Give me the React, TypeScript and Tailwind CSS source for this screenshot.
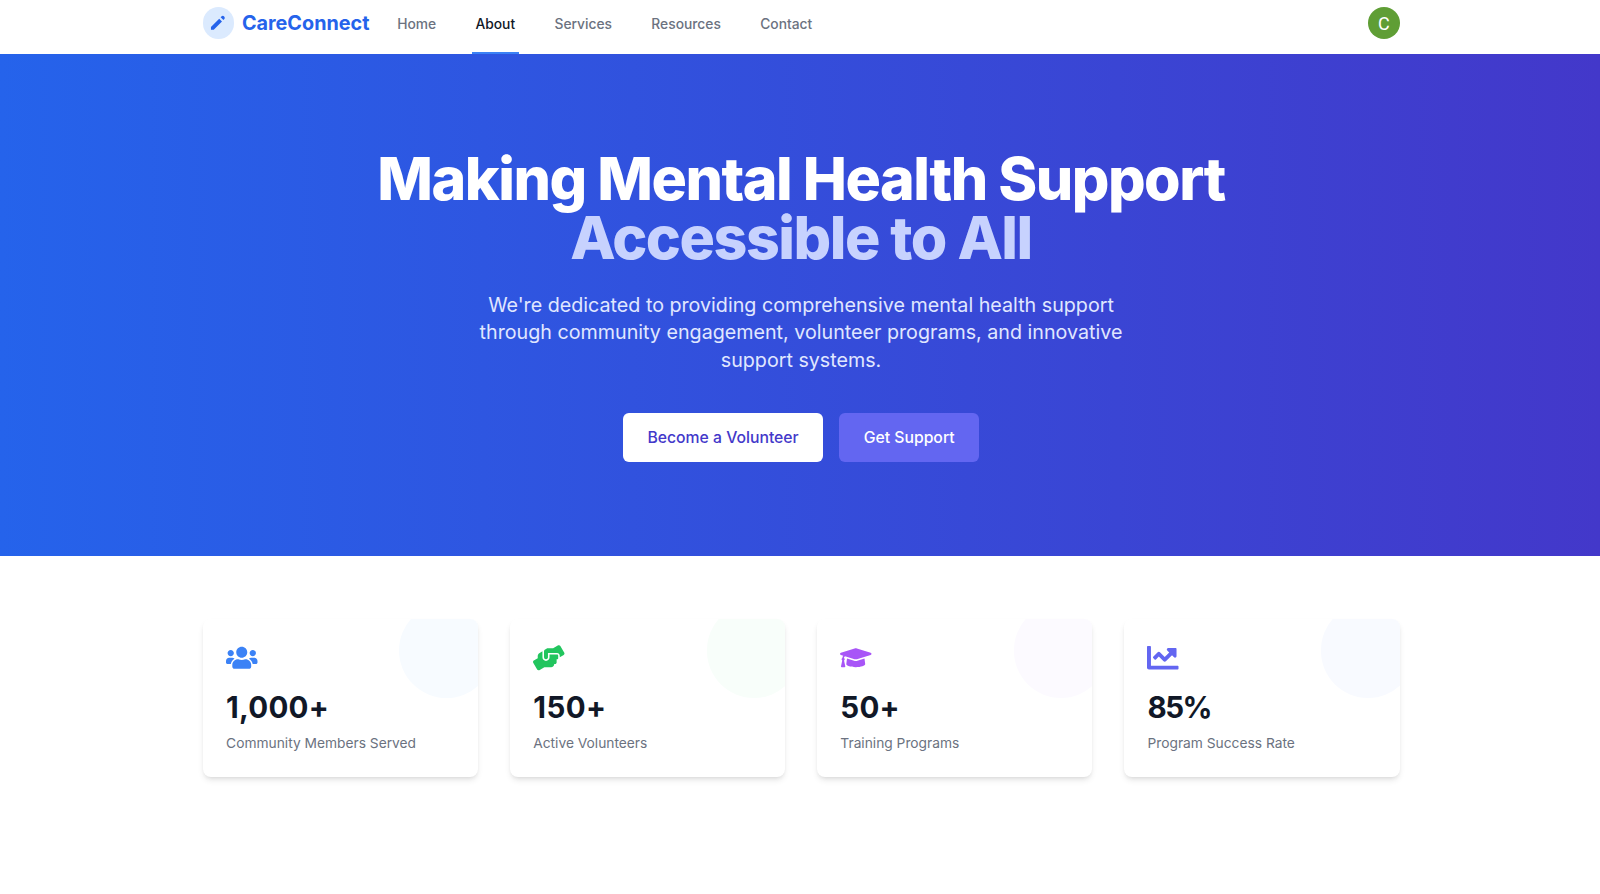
import { FaChartLine, FaGraduationCap, FaHandsHelping, FaUsers } from "react-icons/fa";
import { HiPencil } from "react-icons/hi";

const links = ["Home", "About", "Services", "Resources", "Contact"];

const stats = [
  {
    icon: FaUsers,
    value: "1,000+",
    label: "Community Members Served",
    color: "text-[#3b82f6]",
    blob: "bg-[#f7fbff]",
    tracking: "tracking-[0.008em]",
  },
  {
    icon: FaHandsHelping,
    value: "150+",
    label: "Active Volunteers",
    color: "text-[#22c55e]",
    blob: "bg-[#f8fefa]",
    tracking: "tracking-[0.015em]",
  },
  {
    icon: FaGraduationCap,
    value: "50+",
    label: "Training Programs",
    color: "text-[#a855f7]",
    blob: "bg-[#fcfaff]",
    tracking: "tracking-[0.008em]",
  },
  {
    icon: FaChartLine,
    value: "85%",
    label: "Program Success Rate",
    color: "text-[#6366f1]",
    blob: "bg-[#f8faff]",
    tracking: "tracking-[-0.05em]",
  },
];

function Navbar() {
  return (
    <nav className="h-[54.4px] bg-white pl-[2px]">
      <div className="mx-auto flex h-full w-[1197px] items-start justify-between">
        <div className="flex h-full">
          <a href="#" className="flex h-[46px] items-center gap-[7.9px]">
            <span className="flex size-[31.5px] items-center justify-center rounded-full bg-[#dbeafe]">
              <HiPencil className="size-[19.7px] text-[#2563eb]" />
            </span>
            <span className="pt-[1.5px] text-[19.8px] font-bold text-[#2563eb]">CareConnect</span>
          </a>
          <div className="ml-[23.8px] flex h-full gap-[31.6px]">
            {links.map((link) => (
              <a
                key={link}
                href="#"
                className={
                  link === "About"
                    ? "border-b-2 border-[#3b82f6] px-[3.9px] pt-[15.3px] text-[13.8px] leading-[19.7px] font-medium text-[#111827]"
                    : "px-[3.9px] pt-[15.3px] text-[13.8px] leading-[19.7px] font-medium text-[#6b7280]"
                }
              >
                {link}
              </a>
            ))}
          </div>
        </div>
        <div className="mt-[7.4px] flex size-[31.5px] items-center justify-center rounded-full bg-[#5f9e35] pt-px font-[Roboto] text-[18px] text-white">
          C
        </div>
      </div>
    </nav>
  );
}

function Hero() {
  return (
    <section className="h-[502px] bg-linear-to-r/srgb from-[#2563eb] to-[#4338ca] pt-[94.6px] pl-[2px] text-center">
      <h1 className="text-[59.06px] leading-[59.06px] font-extrabold tracking-[-0.025em] text-white">
        <span className="block">Making Mental Health Support</span>
        <span className="block text-[#c7d2fe]">Accessible to All</span>
      </h1>
      <p className="mx-auto mt-[24.6px] w-[661.5px] text-[19.69px] leading-[27.56px] text-[#e0e7ff]">
        We're dedicated to providing comprehensive mental health support through community
        engagement, volunteer programs, and innovative support systems.
      </p>
      <div className="mt-[38.4px] flex justify-center gap-[15.75px]">
        <button className="h-[49.2px] rounded-[5.9px] bg-white px-[24.6px] text-[15.75px] font-medium text-[#4338ca]">
          Become a Volunteer
        </button>
        <button className="h-[49.2px] rounded-[5.9px] bg-[#6366f1] px-[24.6px] text-[15.75px] font-medium text-white">
          Get Support
        </button>
      </div>
    </section>
  );
}

export default function App() {
  return (
    <div className="h-[894px] overflow-hidden bg-white font-[Inter,sans-serif]">
      <Navbar />
      <Hero />
      <section className="pt-[62.5px] pl-[2px]">
        <div className="mx-auto grid w-[1197px] grid-cols-4 gap-[31.5px]">
          {stats.map(({ icon: Icon, value, label, color, blob, tracking }) => (
            <div
              key={label}
              className="relative h-[158px] overflow-hidden rounded-[7.9px] bg-white p-[23.6px] shadow-md"
            >
              <div className={`absolute -top-[15.75px] -right-[15.75px] size-[94.5px] rounded-full ${blob}`} />
              <Icon className={`relative size-[31.5px] ${color}`} />
              <p className={`mt-[15.75px] text-[29.53px] leading-[35.4px] font-bold text-[#111827] ${tracking}`}>
                {value}
              </p>
              <p className="mt-[9.2px] text-[13.78px] leading-[19.7px] text-[#6b7280]">{label}</p>
            </div>
          ))}
        </div>
      </section>
    </div>
  );
}
